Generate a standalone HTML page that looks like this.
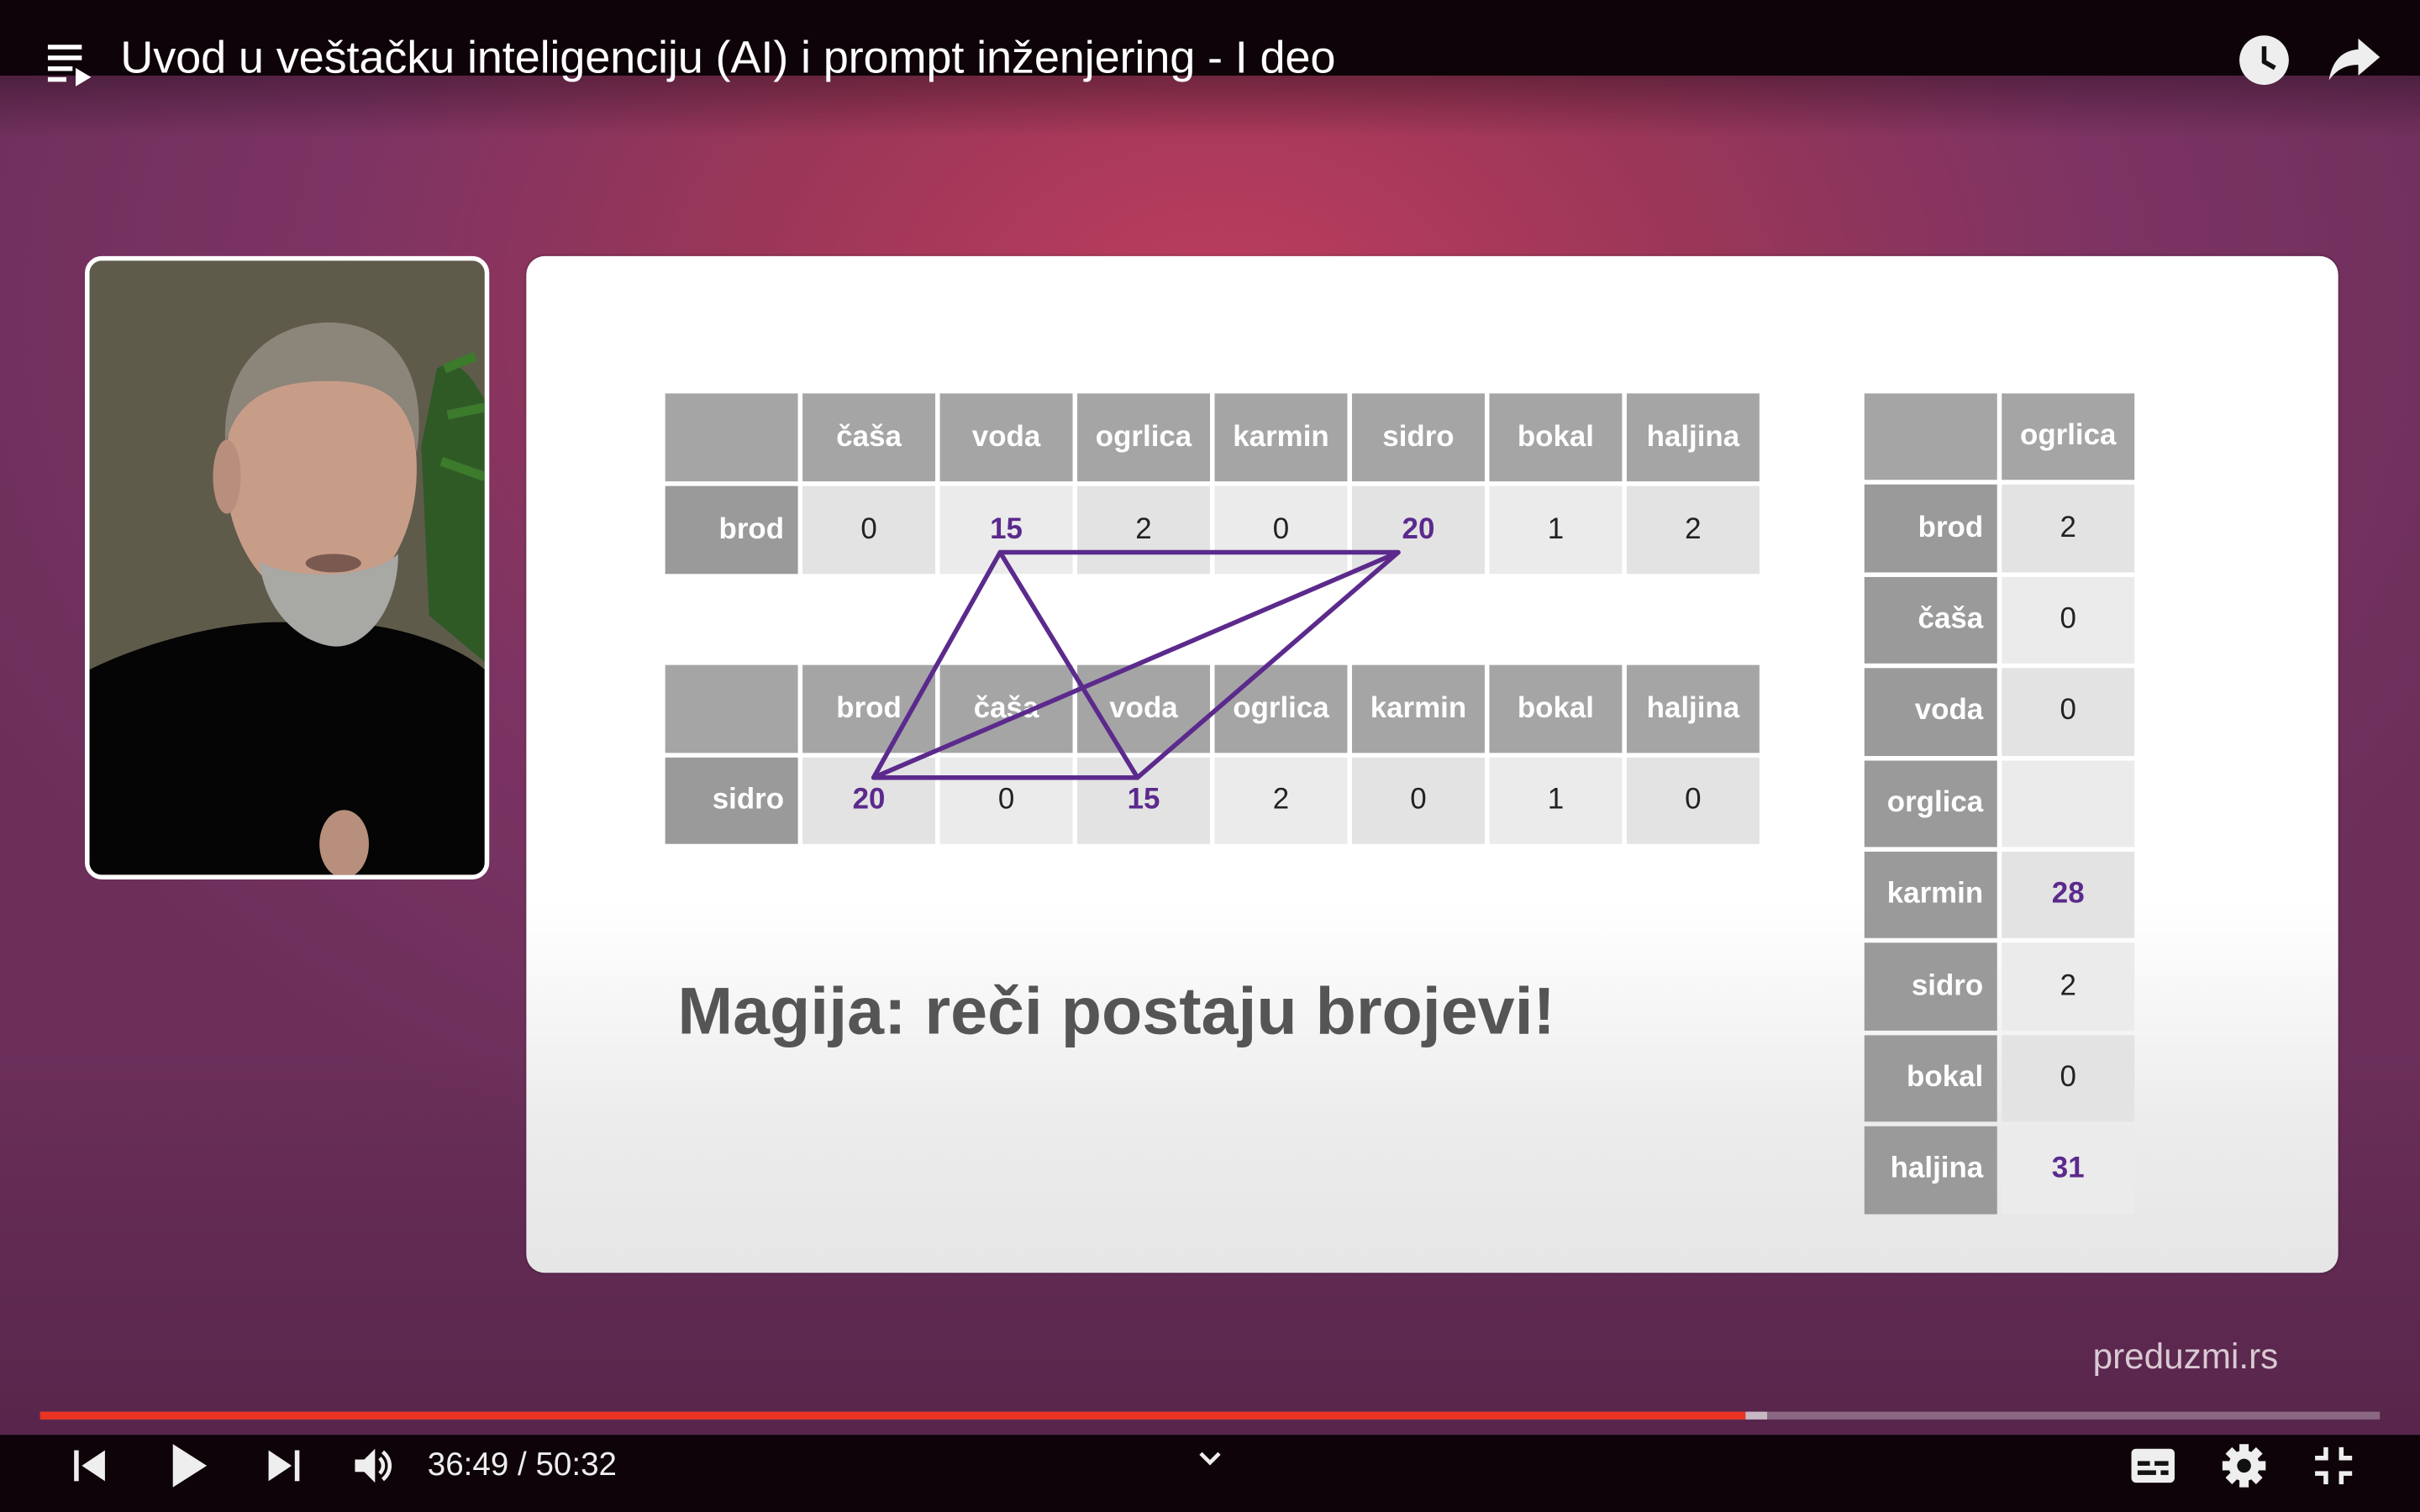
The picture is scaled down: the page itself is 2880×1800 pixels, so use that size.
<!DOCTYPE html>
<html><head><meta charset="utf-8"><style>
html,body{margin:0;padding:0;width:2880px;height:1800px;overflow:hidden;background:#000}
#s{position:absolute;left:0;top:0;width:1568px;height:980px;transform:scale(1.836735);transform-origin:0 0;overflow:hidden;font-family:"Liberation Sans",sans-serif;
background:radial-gradient(ellipse 900px 620px at 790px 200px,#bd3d5e 0%,#9a3658 35%,#7c3363 65%,#6b2f5a 100%);}
#s:after{content:"";position:absolute;left:0;right:0;bottom:0;height:300px;background:linear-gradient(rgba(40,15,40,0),rgba(40,15,40,.35));pointer-events:none}
.top{position:absolute;left:0;top:0;width:1568px;height:49px;background:#0d0309}
.topfade{position:absolute;left:0;top:49px;width:1568px;height:40px;background:linear-gradient(rgba(13,3,9,.35),rgba(13,3,9,0))}
.title{position:absolute;left:78px;top:21px;color:#fff;font-size:29.5px;letter-spacing:-0.1px;white-space:nowrap}
.cam{position:absolute;left:55px;top:166px;width:256px;height:398px;border:3px solid #fff;border-radius:11px;overflow:hidden;background:#5d5a4c}
.slide{position:absolute;left:341px;top:166px;width:1174px;height:659px;border-radius:12px;background:linear-gradient(#fff 0,#fff 420px,#ececec 560px,#e6e6e6 100%);box-shadow:0 0 2px rgba(0,0,0,.3);z-index:1}
.t{position:absolute;display:grid;gap:3px;font-weight:bold;font-size:19px}
.t div{display:flex;align-items:center;justify-content:center}
.h{background:#a5a5a5;color:#fff}
.l{background:#9a9a9a;color:#fff;justify-content:flex-end!important;padding-right:9px}
.d{background:#e3e3e3;color:#222;font-weight:normal}
.d2{background:#ebebeb;color:#222;font-weight:normal}
.t .p{color:#5b2a8c;font-weight:bold}
.mag{position:absolute;left:98px;top:466px;font-size:43px;font-weight:bold;color:#555;letter-spacing:0}
.wm{position:absolute;left:1356px;top:866px;font-size:23px;color:#d9c9d3;z-index:2}
.prog{position:absolute;left:26px;top:915px;width:1516px;height:5px;background:rgba(255,255,255,.3);z-index:2}
.bot{position:absolute;left:0;top:930px;width:1568px;height:50px;background:#0d0309;z-index:3}
.time{position:absolute;left:277px;top:938px;color:#eee;font-size:21px;z-index:4}
svg.i{position:absolute;z-index:4}
</style></head><body><div id="s">
<div class="top"></div><div class="topfade"></div>
<svg class="i" style="left:30px;top:28px" width="32" height="28" viewBox="0 0 32 28"><rect x="1" y="1" width="22" height="3" fill="#fff"/><rect x="1" y="8" width="22" height="3" fill="#fff"/><rect x="1" y="15" width="16" height="3" fill="#fff"/><rect x="1" y="22" width="12" height="3" fill="#fff"/><path d="M19 16 L29 22 L19 28Z" fill="#fff"/></svg>
<div class="title">Uvod u veštačku inteligenciju (AI) i prompt inženjering - I deo</div>
<svg class="i" style="left:1450px;top:22px" width="34" height="34" viewBox="0 0 34 34"><circle cx="17" cy="17" r="16" fill="#eee"/><path d="M17 8 V18 L24 22" stroke="#111" stroke-width="3" fill="none"/></svg>
<svg class="i" style="left:1508px;top:24px" width="36" height="30" viewBox="0 0 36 30"><path d="M34 13 L20 1 V8 C8 9 3 17 1 28 C6 21 12 18 20 18 V25Z" fill="#eee"/></svg>

<div class="cam"><svg width="256" height="398" viewBox="0 0 256 398">
<rect width="256" height="398" fill="#5f5b4b"/>
<path d="M225 70 C240 60 250 80 256 90 V260 L220 230 L215 120Z" fill="#2f5a26"/>
<path d="M230 70 L250 62 M232 100 L256 95 M228 130 L256 140" stroke="#3c7a2c" stroke-width="6"/>
<path d="M0 265 C30 250 90 230 140 235 C190 230 240 250 256 265 V398 H0Z" fill="#050505"/>
<ellipse cx="150" cy="135" rx="62" ry="88" fill="#c89d88"/>
<path d="M88 120 C85 65 120 40 155 40 C195 40 220 70 212 125 C208 90 190 78 155 78 C120 78 95 88 88 120Z" fill="#8b857a"/>
<ellipse cx="89" cy="140" rx="9" ry="24" fill="#b88f7c"/>
<path d="M110 195 C115 235 145 250 160 250 C180 250 200 225 200 190 C185 205 135 208 110 195Z" fill="#a8a8a4"/>
<ellipse cx="158" cy="196" rx="18" ry="6" fill="#7a5a50"/>
<ellipse cx="165" cy="378" rx="16" ry="22" fill="#b88f7c"/>
</svg></div>

<div class="slide">
<div class="t" style="left:90px;top:89px;grid-template-columns:repeat(8,86px);grid-template-rows:57px 57px">
<div class="h"></div><div class="h">čaša</div><div class="h">voda</div><div class="h">ogrlica</div><div class="h">karmin</div><div class="h">sidro</div><div class="h">bokal</div><div class="h">haljina</div>
<div class="l">brod</div><div class="d">0</div><div class="d2 p">15</div><div class="d">2</div><div class="d2">0</div><div class="d p">20</div><div class="d2">1</div><div class="d">2</div>
</div>
<div class="t" style="left:90px;top:265px;grid-template-columns:repeat(8,86px);grid-template-rows:57px 56px">
<div class="h"></div><div class="h">brod</div><div class="h">čaša</div><div class="h">voda</div><div class="h">ogrlica</div><div class="h">karmin</div><div class="h">bokal</div><div class="h">haljina</div>
<div class="l">sidro</div><div class="d p">20</div><div class="d2">0</div><div class="d p">15</div><div class="d2">2</div><div class="d">0</div><div class="d2">1</div><div class="d">0</div>
</div>
<div class="t" style="left:867px;top:89px;grid-template-columns:86px 86px;grid-template-rows:repeat(9,56.4px)">
<div class="h"></div><div class="h">ogrlica</div>
<div class="l">brod</div><div class="d">2</div>
<div class="l">čaša</div><div class="d2">0</div>
<div class="l">voda</div><div class="d">0</div>
<div class="l">orglica</div><div class="d2"></div>
<div class="l">karmin</div><div class="d p">28</div>
<div class="l">sidro</div><div class="d2">2</div>
<div class="l">bokal</div><div class="d">0</div>
<div class="l">haljina</div><div class="d2 p">31</div>
</div>
<svg style="position:absolute;left:0;top:0" width="1174" height="659"><g stroke="#5b2a8c" stroke-width="3" fill="none" stroke-linecap="round">
<path d="M307 192 L565 192 L225 338 L396 338 L565 192"/><path d="M307 192 L225 338 M307 192 L396 338"/></g></svg>
<div class="mag">Magija: reči postaju brojevi!</div>
</div>

<div class="wm">preduzmi.rs</div>
<div class="prog"><div style="position:absolute;left:0;top:0;width:1105px;height:5px;background:#ea3323"></div><div style="position:absolute;left:1105px;top:0;width:14px;height:5px;background:#c8b8c4"></div></div>
<div class="bot"></div>
<svg class="i" style="left:46px;top:938px" width="24" height="24" viewBox="0 0 24 24"><rect x="2" y="2" width="3" height="20" fill="#eee"/><path d="M22 2 V22 L7 12Z" fill="#eee"/></svg>
<svg class="i" style="left:110px;top:935px" width="26" height="30" viewBox="0 0 26 30"><path d="M2 1 L24 15 L2 29Z" fill="#eee"/></svg>
<svg class="i" style="left:172px;top:938px" width="24" height="24" viewBox="0 0 24 24"><path d="M2 2 V22 L17 12Z" fill="#eee"/><rect x="19" y="2" width="3" height="20" fill="#eee"/></svg>
<svg class="i" style="left:228px;top:936px" width="28" height="28" viewBox="0 0 28 28"><path d="M2 10 H8 L15 3 V25 L8 18 H2Z" fill="#eee"/><path d="M18 9 C21 12 21 16 18 19 M20 5 C26 10 26 18 20 23" stroke="#eee" stroke-width="2.5" fill="none"/></svg>
<div class="time">36:49 / 50:32</div>
<svg class="i" style="left:776px;top:940px" width="16" height="12" viewBox="0 0 16 12"><path d="M2 2 L8 8 L14 2" stroke="#eee" stroke-width="2.5" fill="none"/></svg>
<svg class="i" style="left:1380px;top:937px" width="30" height="26" viewBox="0 0 30 26"><rect x="1" y="2" width="28" height="22" rx="3" fill="#eee"/><rect x="5" y="10" width="8" height="3" fill="#111"/><rect x="16" y="10" width="9" height="3" fill="#111"/><rect x="5" y="16" width="12" height="3" fill="#111"/><rect x="20" y="16" width="5" height="3" fill="#111"/></svg>
<svg class="i" style="left:1439px;top:935px" width="30" height="30" viewBox="0 0 30 30"><g fill="#eee"><circle cx="15" cy="15" r="10"/><rect x="12" y="1" width="6" height="28"/><rect x="1" y="12" width="28" height="6"/><rect x="12" y="1" width="6" height="28" transform="rotate(45 15 15)"/><rect x="12" y="1" width="6" height="28" transform="rotate(-45 15 15)"/></g><circle cx="15" cy="15" r="4.5" fill="#111"/></svg>
<svg class="i" style="left:1498px;top:936px" width="28" height="28" viewBox="0 0 28 28"><path d="M9 2 V9 H2 M19 2 V9 H26 M2 19 H9 V26 M26 19 H19 V26" stroke="#eee" stroke-width="3" fill="none"/></svg>
</div></body></html>
